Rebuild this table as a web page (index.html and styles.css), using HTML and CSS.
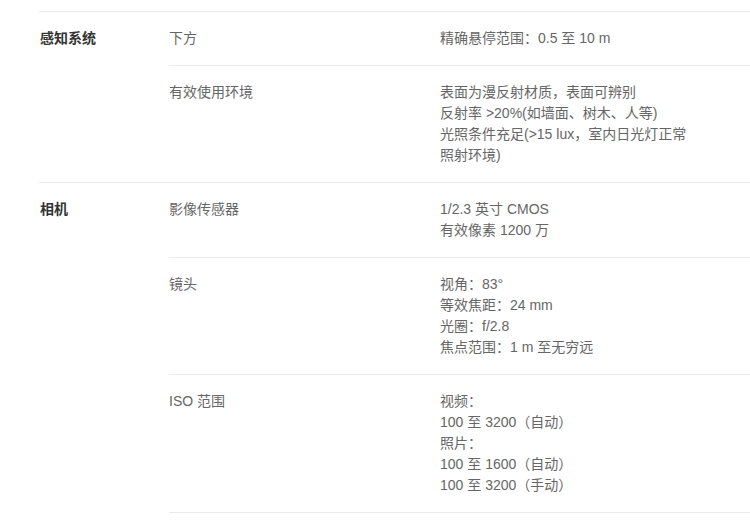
FILE: index.html
```html
<!DOCTYPE html>
<html lang="zh-CN">
<head>
<meta charset="utf-8">
<title>规格参数</title>
<link rel="stylesheet" href="styles.css">
</head>
<body>
<div class="specs">
  <section class="group">
    <h3 class="cat">感知系统</h3>
    <div class="rows">
      <div class="row">
        <div class="label">下方</div>
        <div class="value">精确悬停范围：0.5 至 10 m</div>
      </div>
      <div class="row">
        <div class="label">有效使用环境</div>
        <div class="value">表面为漫反射材质，表面可辨别<br>反射率 &gt;20%(如墙面、树木、人等)<br>光照条件充足(&gt;15 lux，室内日光灯正常<br>照射环境)</div>
      </div>
    </div>
  </section>
  <section class="group">
    <h3 class="cat">相机</h3>
    <div class="rows rows-open">
      <div class="row">
        <div class="label">影像传感器</div>
        <div class="value">1/2.3 英寸 CMOS<br>有效像素 1200 万</div>
      </div>
      <div class="row">
        <div class="label">镜头</div>
        <div class="value">视角：83°<br>等效焦距：24 mm<br>光圈：f/2.8<br>焦点范围：1 m 至无穷远</div>
      </div>
      <div class="row">
        <div class="label">ISO 范围</div>
        <div class="value">视频：<br>100 至 3200（自动）<br>照片：<br>100 至 1600（自动）<br>100 至 3200（手动）</div>
      </div>
    </div>
  </section>
</div>
</body>
</html>
```
FILE: styles.css
```css
html, body {
  margin: 0;
  padding: 0;
  background: #fff;
}
body {
  font-family: "Liberation Sans", "Noto Sans CJK SC", sans-serif;
  font-size: 14px;
  line-height: 21px;
  color: #666;
  overflow: hidden;
}
.specs {
  padding: 11px 0 0 39px;
}
.group {
  display: flex;
  border-top: 1px solid #ebebeb;
}
.cat {
  flex: 0 0 129px;
  margin: 0;
  padding: 16px 0 0 1px;
  font-size: 14px;
  line-height: 21px;
  font-weight: bold;
  color: #333;
}
.rows {
  flex: 1;
}
.row {
  display: flex;
  padding: 16px 0;
}
.row + .row {
  border-top: 1px solid #ebebeb;
}
.rows-open .row:last-child {
  border-bottom: 1px solid #ebebeb;
}
.label {
  flex: 0 0 271px;
}
.value {
  flex: 1;
}
```
